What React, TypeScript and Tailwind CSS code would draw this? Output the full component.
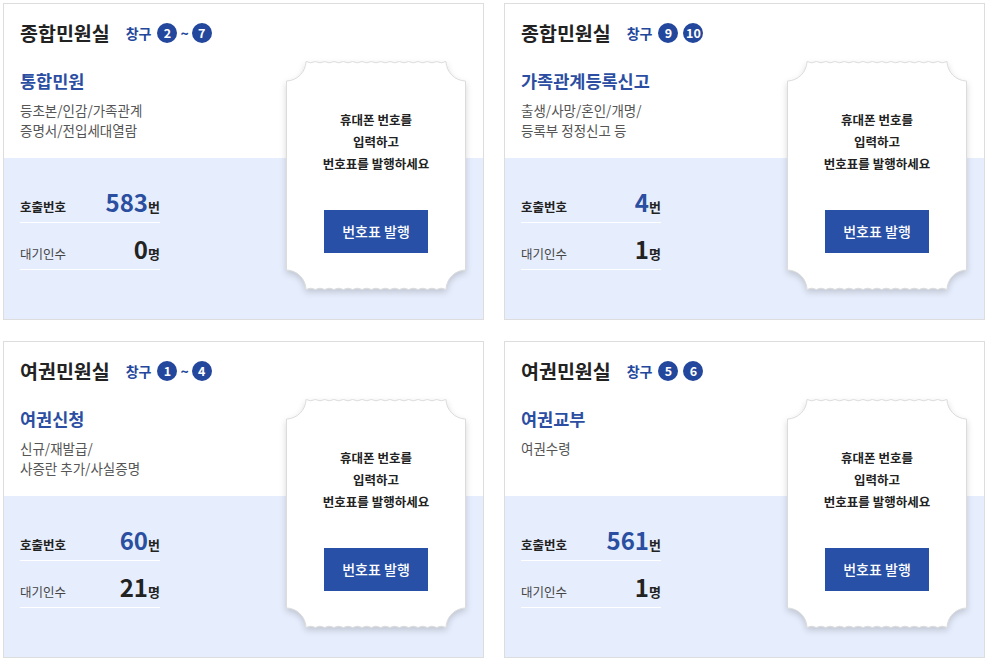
import React from "react";

type Card = {
  room: string;
  windows: React.ReactNode;
  service: string;
  desc: string[];
  call: string;
  wait: string;
};

const Circle = ({ n }: { n: string }) => (
  <span className="inline-flex h-[20px] w-[20px] items-center justify-center rounded-full bg-[#23479c] text-[12.5px] font-bold leading-none text-white">
    {n}
  </span>
);

const Tilde = () => <span className="mx-[3px] text-[14px] font-bold text-[#23479c]">~</span>;

const cards: Card[] = [
  {
    room: "종합민원실",
    windows: (
      <>
        <Circle n="2" />
        <Tilde />
        <Circle n="7" />
      </>
    ),
    service: "통합민원",
    desc: ["등초본/인감/가족관계", "증명서/전입세대열람"],
    call: "583",
    wait: "0",
  },
  {
    room: "종합민원실",
    windows: (
      <>
        <Circle n="9" />
        <span className="w-[5px]" />
        <Circle n="10" />
      </>
    ),
    service: "가족관계등록신고",
    desc: ["출생/사망/혼인/개명/", "등록부 정정신고 등"],
    call: "4",
    wait: "1",
  },
  {
    room: "여권민원실",
    windows: (
      <>
        <Circle n="1" />
        <Tilde />
        <Circle n="4" />
      </>
    ),
    service: "여권신청",
    desc: ["신규/재발급/", "사증란 추가/사실증명"],
    call: "60",
    wait: "21",
  },
  {
    room: "여권민원실",
    windows: (
      <>
        <Circle n="5" />
        <span className="w-[5px]" />
        <Circle n="6" />
      </>
    ),
    service: "여권교부",
    desc: ["여권수령"],
    call: "561",
    wait: "1",
  },
];

function ticketPath(w: number, h: number, r: number) {
  const span = w - 2 * r;
  const n = 15;
  const p = span / n;
  const a = 1.3;
  let d = `M ${r} 0.5`;
  for (let i = 0; i < n; i++) {
    const x0 = r + i * p;
    d += ` Q ${(x0 + p / 2).toFixed(2)} ${0.5 + 2 * a} ${(x0 + p).toFixed(2)} 0.5`;
  }
  d += ` A ${r} ${r} 0 0 0 ${w - 0.5} ${r}`;
  d += ` L ${w - 0.5} ${h - r}`;
  d += ` A ${r} ${r} 0 0 0 ${w - r} ${h - 0.5}`;
  for (let i = 0; i < n; i++) {
    const x0 = w - r - i * p;
    d += ` Q ${(x0 - p / 2).toFixed(2)} ${h - 0.5 - 2 * a} ${(x0 - p).toFixed(2)} ${h - 0.5}`;
  }
  d += ` A ${r} ${r} 0 0 0 0.5 ${h - r}`;
  d += ` L 0.5 ${r}`;
  d += ` A ${r} ${r} 0 0 0 ${r} 0.5 Z`;
  return d;
}

const Ticket = () => (
  <div className="relative mr-[17px] mt-[57px] flex h-[229px] w-[180px] shrink-0 flex-col items-center">
    <svg
      className="absolute inset-0 overflow-visible"
      width={180}
      height={229}
      style={{ filter: "drop-shadow(0 3px 3px rgba(0,0,0,0.16))" }}
    >
      <path d={ticketPath(180, 229, 20)} fill="#ffffff" stroke="#dcdcdc" strokeWidth={1} />
    </svg>
    <div className="relative mt-[48px] text-center text-[12.5px] font-bold leading-[22px] text-[#222]">
      <p>휴대폰 번호를</p>
      <p>입력하고</p>
      <p>번호표를 발행하세요</p>
    </div>
    <button className="relative mt-[35px] flex h-[43px] w-[104px] items-center justify-center bg-[#2750a6] text-[14px] font-medium text-white">
      번호표 발행
    </button>
  </div>
);

const CardView = ({ c }: { c: Card }) => (
  <div className="flex h-[317px] w-[481px] border border-[#dddddd] bg-[linear-gradient(to_bottom,#ffffff_154px,#e6edfc_154px)]">
    <div className="flex flex-1 flex-col pl-4">
      <div className="h-[154px]">
        <div className="mt-[15px] flex h-[28px] items-center">
          <span className="text-[19.5px] font-bold text-[#222]">{c.room}</span>
          <span className="ml-[16px] mr-[6px] text-[14px] font-bold text-[#23479c]">창구</span>
          {c.windows}
        </div>
        <div className="mt-[22px] text-[17.5px] font-bold leading-[24px] text-[#2b4ea2]">{c.service}</div>
        <div className="mt-[7px] text-[13.5px] leading-[20px] text-[#555]">
          {c.desc.map((l) => (
            <p key={l}>{l}</p>
          ))}
        </div>
      </div>
      <div className="w-[140px] pt-[18px]">
        <div className="flex h-[47px] items-baseline justify-between border-b border-white pt-[14px]">
          <span className="text-[12.5px] font-bold text-[#222]">호출번호</span>
          <span className="flex items-baseline">
            <span className="text-[24px] font-bold leading-none text-[#2a4ea0]">{c.call}</span>
            <span className="text-[13px] font-bold text-[#222]">번</span>
          </span>
        </div>
        <div className="flex h-[47px] items-baseline justify-between border-b border-white pt-[14px]">
          <span className="text-[12.5px] text-[#444]">대기인수</span>
          <span className="flex items-baseline">
            <span className="text-[24px] font-bold leading-none text-[#222]">{c.wait}</span>
            <span className="text-[13px] font-bold text-[#222]">명</span>
          </span>
        </div>
      </div>
    </div>
    <Ticket />
  </div>
);

export default function App() {
  return (
    <div
      className="grid h-[662px] w-[990px] grid-cols-[481px_481px] content-start gap-x-[20px] gap-y-[21px] bg-white pl-[3px] pt-[3px]"
      style={{ fontFamily: '"Noto Sans CJK KR", "Noto Sans", sans-serif' }}
    >
      {cards.map((c, i) => (
        <CardView key={i} c={c} />
      ))}
    </div>
  );
}
